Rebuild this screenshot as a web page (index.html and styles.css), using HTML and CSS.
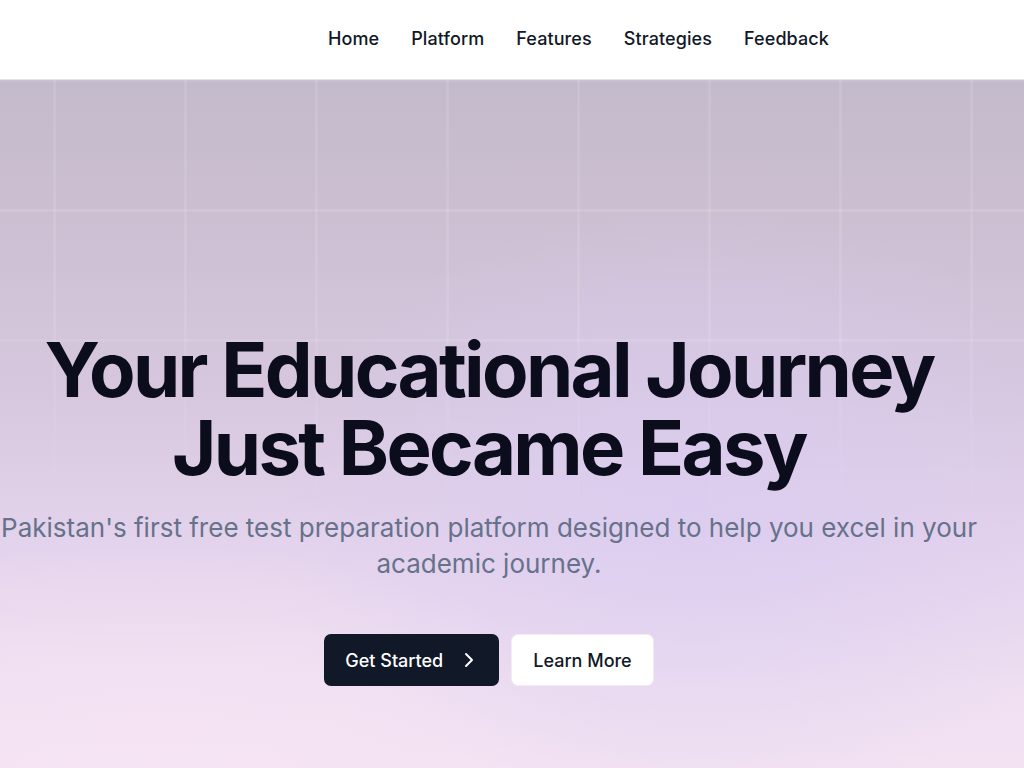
FILE: index.html
```html
<!DOCTYPE html>
<html lang="en">
<head>
<meta charset="utf-8">
<title>Your Educational Journey Just Became Easy</title>
<link rel="stylesheet" href="styles.css">
</head>
<body>
<header class="site-header">
  <nav class="main-nav">
    <a href="#" class="nav-link">Home</a>
    <a href="#" class="nav-link">Platform</a>
    <a href="#" class="nav-link">Features</a>
    <a href="#" class="nav-link">Strategies</a>
    <a href="#" class="nav-link">Feedback</a>
  </nav>
</header>
<main class="hero">
  <div class="hero-inner">
    <h1 class="hero-title">Your Educational Journey<br>Just Became Easy</h1>
    <p class="hero-sub">Pakistan's first free test preparation platform designed to help you excel in your<br>academic journey.</p>
    <div class="hero-actions">
      <a href="#" class="btn btn-primary">Get Started
        <svg class="btn-icon" viewBox="0 0 24 24" width="24" height="24" fill="none" stroke="currentColor" stroke-width="2" stroke-linecap="round" stroke-linejoin="round"><path d="m9 18 6-6-6-6"/></svg>
      </a>
      <a href="#" class="btn btn-secondary">Learn More</a>
    </div>
  </div>
</main>
</body>
</html>
```

FILE: styles.css
```css
* { box-sizing: border-box; }
html, body { margin: 0; padding: 0; }
body {
  font-family: Inter, "Noto Sans", "Liberation Sans", sans-serif;
  color: #0f1220;
  background: #f2e2f2;
  overflow: hidden;
}
a { text-decoration: none; color: inherit; }

.site-header {
  height: 80px;
  background: #ffffff;
  border-bottom: 1px solid #e4e2e8;
  display: flex;
  align-items: center;
}
.main-nav {
  display: flex;
  gap: 32px;
  padding-left: 328px;
  padding-bottom: 3px;
}
.nav-link {
  font-size: 18px;
  font-weight: 500;
  color: #111827;
  letter-spacing: 0.005em;
}

.hero {
  position: relative;
  height: 688px;
  background:
    radial-gradient(ellipse 420px 300px at 68% 62%, rgba(218, 204, 242, 0.75), rgba(218, 204, 242, 0) 100%),
    radial-gradient(ellipse 500px 260px at 15% 105%, rgba(246, 228, 244, 0.9), rgba(246, 228, 244, 0) 100%),
    linear-gradient(180deg, #c3bacb 0%, #ccbfd2 20%, #d6c7de 45%, #e4d3ec 68%, #efdff1 88%, #f2e2f2 100%);
}
.hero::before {
  content: "";
  position: absolute;
  inset: 0;
  background-image:
    linear-gradient(90deg, rgba(255, 255, 255, 0.1) 0, rgba(255, 255, 255, 0.1) 3px, transparent 3px),
    linear-gradient(180deg, rgba(255, 255, 255, 0.1) 0, rgba(255, 255, 255, 0.1) 3px, transparent 3px);
  background-size: 131px 130px;
  background-position: 53px -1px;
  -webkit-mask-image: linear-gradient(180deg, #000 0%, #000 35%, rgba(0,0,0,0.4) 55%, transparent 68%);
  mask-image: linear-gradient(180deg, #000 0%, #000 35%, rgba(0,0,0,0.4) 55%, transparent 68%);
  pointer-events: none;
}
.hero-inner {
  position: relative;
  width: 978px;
  padding-top: 250px;
  text-align: center;
  display: flex;
  flex-direction: column;
  align-items: center;
}
.hero-title {
  margin: 0;
  font-size: 76px;
  line-height: 78px;
  font-weight: 700;
  letter-spacing: -0.035em;
  color: #0b0d1c;
}
.hero-sub {
  margin: 24px 0 0;
  font-size: 26px;
  line-height: 36px;
  font-weight: 400;
  color: #66728a;
  white-space: nowrap;
}
.hero-actions {
  display: flex;
  gap: 12px;
  margin-top: 52px;
}
.btn {
  height: 52px;
  display: inline-flex;
  align-items: center;
  font-size: 18px;
  font-weight: 500;
  border-radius: 7px;
}
.btn-primary {
  background: #111827;
  color: #ffffff;
  padding: 0 18px 0 21px;
  gap: 14px;
}
.btn-icon { width: 24px; height: 24px; }
.btn-secondary {
  background: #ffffff;
  color: #111827;
  padding: 0 21px;
  border: 1px solid #f1ecf6;
}
```
